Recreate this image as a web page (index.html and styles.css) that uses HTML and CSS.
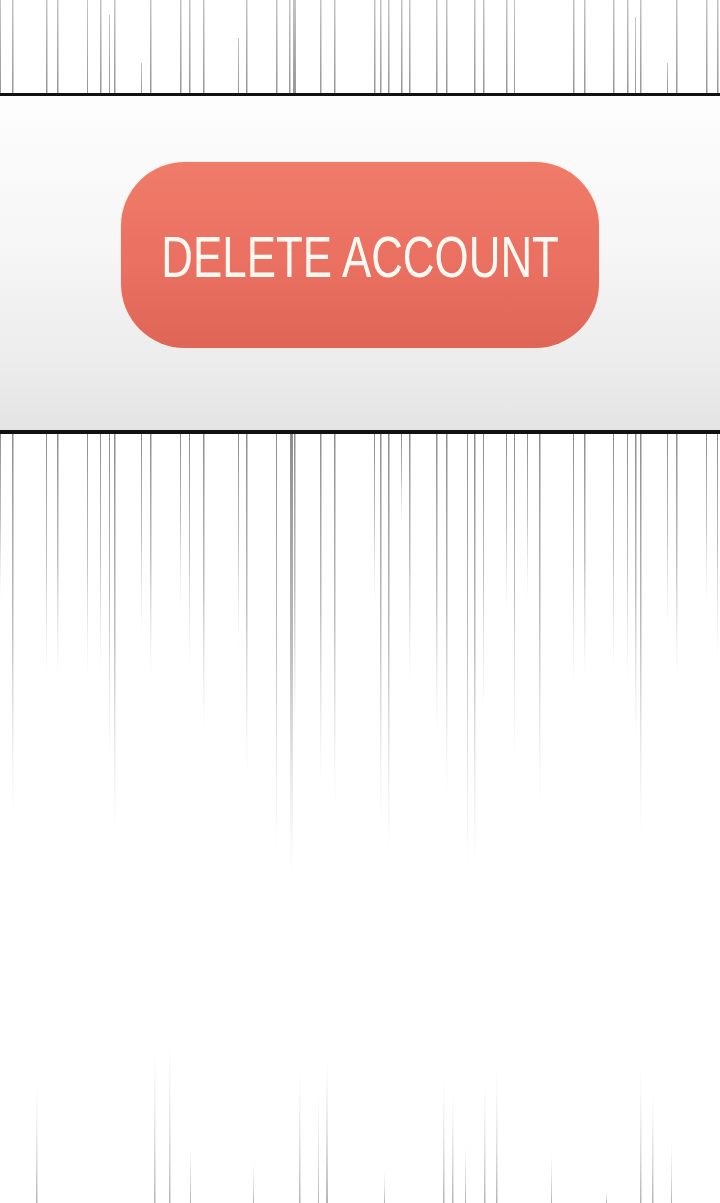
FILE: index.html
```html
<!DOCTYPE html>
<html lang="en">
<head>
    <meta charset="UTF-8">
    <meta name="viewport" content="width=device-width, initial-scale=1.0">
    <title>Delete Account</title>
    <link rel="stylesheet" href="styles.css">
</head>
<body>

<!-- speed lines above the panel -->
<svg class="lines-top" width="720" height="93" viewBox="0 0 720 93">
    <defs>
        <linearGradient id="topFade" x1="0" y1="0" x2="0" y2="1">
            <stop offset="0" stop-color="#c4c4c4"/>
            <stop offset="1" stop-color="#979797"/>
        </linearGradient>
    </defs>
    <g fill="url(#topFade)">
        <rect x="0" y="0" width="1" height="93"/>
        <rect x="12" y="0" width="1.5" height="93"/>
        <rect x="46" y="0" width="1.5" height="93"/>
        <rect x="57" y="0" width="1.5" height="93"/>
        <rect x="87" y="0" width="1" height="93"/>
        <rect x="100" y="0" width="1.5" height="93"/>
        <rect x="109" y="15" width="1" height="78"/>
        <rect x="114" y="0" width="1.5" height="93"/>
        <rect x="141" y="63" width="1" height="30"/>
        <rect x="150" y="0" width="1.5" height="93"/>
        <rect x="180" y="0" width="1.5" height="93"/>
        <rect x="189" y="0" width="1.5" height="93"/>
        <rect x="203" y="0" width="1.5" height="93"/>
        <rect x="238" y="38" width="1" height="55"/>
        <rect x="246" y="0" width="1.5" height="93"/>
        <rect x="276" y="0" width="1.5" height="93"/>
        <rect x="289" y="0" width="1.5" height="93"/>
        <rect x="293" y="0" width="3" height="93"/>
        <rect x="320" y="0" width="1.5" height="93"/>
        <rect x="334" y="0" width="1.5" height="93"/>
        <rect x="374" y="0" width="1.5" height="93"/>
        <rect x="380" y="0" width="1.5" height="93"/>
        <rect x="388" y="0" width="1.5" height="93"/>
        <rect x="401" y="0" width="1.5" height="93"/>
        <rect x="409" y="0" width="1.5" height="93"/>
        <rect x="436" y="0" width="1.5" height="93"/>
        <rect x="446" y="0" width="1.5" height="93"/>
        <rect x="474" y="0" width="1.5" height="93"/>
        <rect x="483" y="0" width="1.5" height="93"/>
        <rect x="506" y="0" width="1.5" height="93"/>
        <rect x="514" y="0" width="1" height="93"/>
        <rect x="573" y="0" width="1.5" height="93"/>
        <rect x="584" y="0" width="1.5" height="93"/>
        <rect x="613" y="0" width="1.5" height="93"/>
        <rect x="627" y="0" width="1.5" height="93"/>
        <rect x="635" y="17" width="1" height="76"/>
        <rect x="640" y="0" width="1.5" height="93"/>
        <rect x="667" y="63" width="1" height="30"/>
        <rect x="676" y="0" width="1.5" height="93"/>
        <rect x="706" y="0" width="1.5" height="93"/>
        <rect x="717" y="0" width="1.5" height="93"/>
    </g>
</svg>

<section class="panel">
    <button class="delete-btn" type="button"><span>DELETE ACCOUNT</span></button>
</section>

<!-- speed lines below the panel -->
<svg class="lines-bottom" width="720" height="769" viewBox="0 0 720 769">
    <defs>
        <linearGradient id="downFade" x1="0" y1="0" x2="0" y2="1">
            <stop offset="0" stop-color="#8c8c8c"/>
            <stop offset="0.5" stop-color="#a8a8a8" stop-opacity="0.75"/>
            <stop offset="1" stop-color="#d0d0d0" stop-opacity="0"/>
        </linearGradient>
        <linearGradient id="upFade" x1="0" y1="0" x2="0" y2="1">
            <stop offset="0" stop-color="#e0e0e0" stop-opacity="0"/>
            <stop offset="1" stop-color="#b4b4b4"/>
        </linearGradient>
    </defs>
    <g fill="url(#downFade)">
        <rect x="0" y="0" width="1" height="165"/>
        <rect x="12" y="0" width="1.5" height="380"/>
        <rect x="46" y="0" width="1" height="245"/>
        <rect x="57" y="0" width="1.5" height="245"/>
        <rect x="87" y="0" width="1" height="245"/>
        <rect x="100" y="0" width="1" height="240"/>
        <rect x="109" y="0" width="1" height="330"/>
        <rect x="114" y="0" width="1.5" height="400"/>
        <rect x="141" y="0" width="1" height="200"/>
        <rect x="150" y="0" width="1.5" height="245"/>
        <rect x="180" y="0" width="1" height="175"/>
        <rect x="189" y="0" width="1" height="235"/>
        <rect x="203" y="0" width="1.5" height="300"/>
        <rect x="238" y="0" width="1" height="215"/>
        <rect x="246" y="0" width="1.5" height="340"/>
        <rect x="276" y="0" width="1" height="420"/>
        <rect x="290" y="0" width="3" height="440"/>
        <rect x="294" y="0" width="1.5" height="300"/>
        <rect x="320" y="0" width="1.5" height="350"/>
        <rect x="334" y="0" width="1.5" height="370"/>
        <rect x="374" y="0" width="1" height="170"/>
        <rect x="380" y="0" width="1.5" height="390"/>
        <rect x="388" y="0" width="1.5" height="420"/>
        <rect x="401" y="0" width="1" height="90"/>
        <rect x="409" y="0" width="1.5" height="250"/>
        <rect x="436" y="0" width="1.5" height="300"/>
        <rect x="446" y="0" width="1.5" height="360"/>
        <rect x="467" y="0" width="1" height="440"/>
        <rect x="474" y="0" width="1.5" height="430"/>
        <rect x="483" y="0" width="1" height="280"/>
        <rect x="506" y="0" width="1" height="180"/>
        <rect x="514" y="0" width="1" height="325"/>
        <rect x="527" y="0" width="1" height="165"/>
        <rect x="539" y="0" width="1.5" height="370"/>
        <rect x="573" y="0" width="1" height="255"/>
        <rect x="584" y="0" width="1.5" height="245"/>
        <rect x="613" y="0" width="1" height="240"/>
        <rect x="627" y="0" width="1" height="250"/>
        <rect x="635" y="0" width="1.5" height="310"/>
        <rect x="640" y="0" width="1.5" height="400"/>
        <rect x="667" y="0" width="1" height="195"/>
        <rect x="676" y="0" width="1.5" height="245"/>
        <rect x="706" y="0" width="1" height="170"/>
        <rect x="717" y="0" width="1" height="225"/>
    </g>
    <g fill="url(#upFade)">
        <rect x="36" y="651" width="1.5" height="118"/>
        <rect x="154" y="616" width="1.5" height="153"/>
        <rect x="169" y="606" width="1.5" height="163"/>
        <rect x="190" y="706" width="1" height="63"/>
        <rect x="253" y="726" width="1" height="43"/>
        <rect x="299" y="636" width="1.5" height="133"/>
        <rect x="318" y="656" width="1" height="113"/>
        <rect x="326" y="626" width="2" height="143"/>
        <rect x="384" y="736" width="1" height="33"/>
        <rect x="443" y="646" width="1.5" height="123"/>
        <rect x="452" y="656" width="1.5" height="113"/>
        <rect x="465" y="706" width="1" height="63"/>
        <rect x="484" y="646" width="1.5" height="123"/>
        <rect x="496" y="636" width="1.5" height="133"/>
        <rect x="551" y="716" width="1" height="53"/>
        <rect x="606" y="756" width="1" height="13"/>
        <rect x="640" y="636" width="1.5" height="133"/>
        <rect x="652" y="656" width="1.5" height="113"/>
        <rect x="671" y="706" width="1" height="63"/>
    </g>
</svg>

</body>
</html>
```

FILE: styles.css
```css
body {
    margin: 0;
    background: #fff;
    font-family: "Liberation Sans", Arial, sans-serif;
}
svg {
    display: block;
}
.panel {
    display: flex;
    justify-content: center;
    padding: 66px 0 82px;
    border-top: 3px solid #111;
    border-bottom: 4px solid #111;
    background: linear-gradient(#fdfdfd, #f6f6f6 45%, #ececec 80%, #e4e4e4);
}
.delete-btn {
    display: flex;
    justify-content: center;
    align-items: center;
    width: 478px;
    height: 186px;
    border: none;
    border-radius: 64px;
    background: linear-gradient(#f07b69, #ea7061 55%, #df6557);
    box-shadow: 0 0 0 1px rgba(255, 236, 220, 0.6);
    color: #fff9f2;
    font-family: "Liberation Sans", Arial, sans-serif;
    font-size: 57px;
    padding: 4px 0 0;
    cursor: pointer;
}
.delete-btn span {
    flex: none;
    transform: scaleX(0.77);
    white-space: nowrap;
}
```
